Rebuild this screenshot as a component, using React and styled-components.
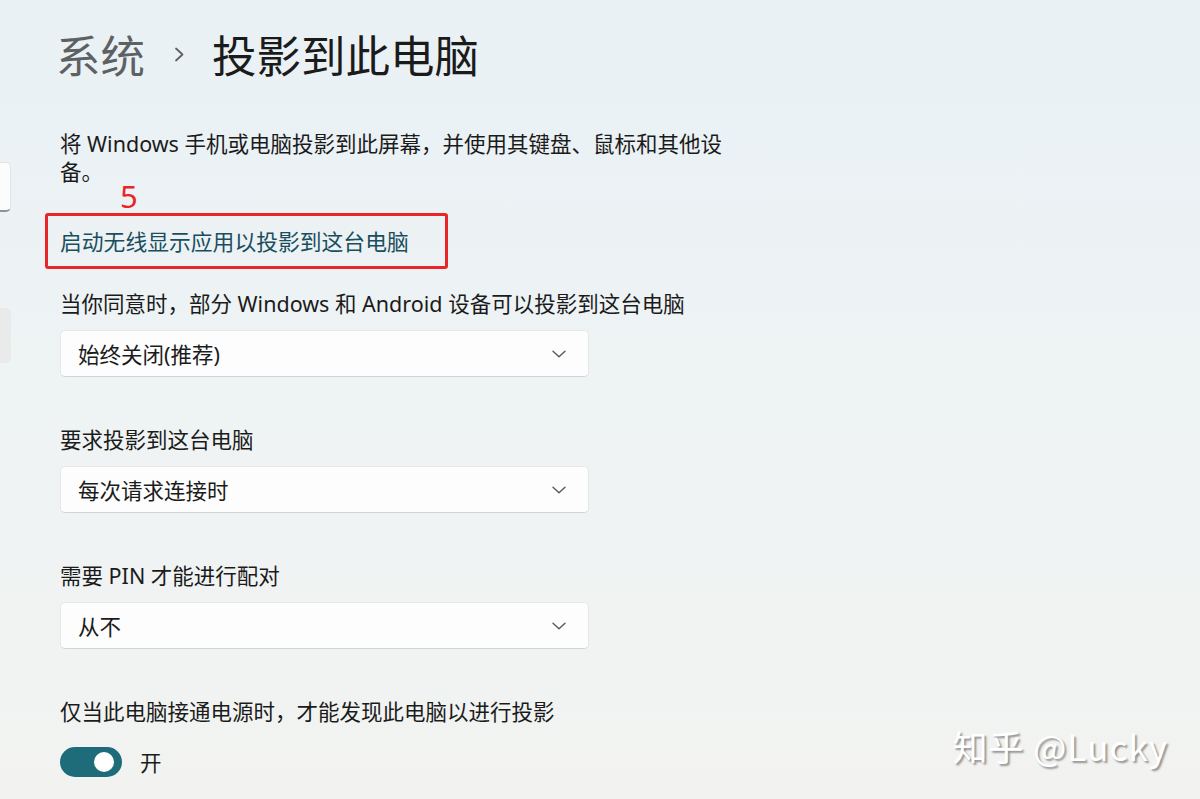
import React from "react";
import styled, { createGlobalStyle } from "styled-components";

const GlobalStyle = createGlobalStyle`
  html, body {
    margin: 0;
    padding: 0;
  }
  body {
    font-family: "Noto Sans", "Noto Sans CJK SC", sans-serif;
    background: #eef2f3;
  }
`;

const Window = styled.div`
  position: relative;
  width: 1200px;
  height: 799px;
  overflow: hidden;
  display: flex;
  background: linear-gradient(180deg, #e9f1f5 0%, #eef3f4 45%, #f2f3f1 100%);
`;

const Sidebar = styled.div`
  width: 11px;
  flex: none;
  display: flex;
  flex-direction: column;
  overflow: hidden;
`;

const SearchBox = styled.div`
  margin-top: 162px;
  margin-left: -20px;
  height: 47px;
  background: #fbfcfc;
  border: 1px solid #e2e4e5;
  border-bottom: 2px solid #8f9396;
  border-radius: 5px;
`;

const NavItem = styled.div`
  margin-top: 96px;
  margin-left: -20px;
  height: 55px;
  background: #e9eaea;
  border-radius: 5px;
`;

const Main = styled.main`
  flex: 1;
  padding: 26px 0 0 49px;
  display: flex;
  flex-direction: column;
  align-items: flex-start;
`;

const Breadcrumb = styled.h1`
  margin: 0 0 0 -4px;
  display: flex;
  align-items: center;
  font-family: "Noto Sans CJK SC", sans-serif;
  font-weight: 400;
  font-size: 44.5px;
  line-height: 56px;
  color: #1b1b1b;
`;

const Parent = styled.span`
  color: #5e6163;
`;

const Separator = styled.span`
  display: flex;
  margin: 0 27px 0 29px;
`;

const Description = styled.p`
  margin: 48px 0 0;
  max-width: 680px;
  font-size: 21.5px;
  line-height: 28px;
  color: #1b1b1b;
`;

const LinkBox = styled.div`
  position: relative;
  margin: 27px 0 0 -15px;
  padding: 11px 36px 11px 12px;
  border: 3px solid #e8262a;
  border-radius: 3px;
`;

const StepBadge = styled.span`
  position: absolute;
  left: 72px;
  top: -30px;
  font-family: "Noto Sans", sans-serif;
  font-size: 31px;
  line-height: 20px;
  color: #e8262a;
`;

const Link = styled.a`
  display: block;
  font-family: "Noto Sans CJK SC", sans-serif;
  font-size: 21.8px;
  line-height: 28px;
  color: #1a4e5f;
  text-decoration: none;
`;

const Label = styled.div`
  margin-top: ${(p) => p.$gap}px;
  font-size: 21.5px;
  line-height: 28px;
  color: #1b1b1b;
`;

const Select = styled.div`
  margin-top: 12px;
  box-sizing: border-box;
  width: 529px;
  height: 47px;
  padding: 0 22px 0 17px;
  display: flex;
  align-items: center;
  justify-content: space-between;
  background: #fdfdfd;
  border: 1px solid #e6e7e7;
  border-bottom-color: #d2d3d3;
  border-radius: 5px;
  font-size: 21.5px;
  color: #1b1b1b;
`;

const ToggleRow = styled.div`
  margin-top: 20px;
  display: flex;
  align-items: center;
  gap: 18px;
  font-size: 21.5px;
  color: #1b1b1b;
`;

const Track = styled.div`
  box-sizing: border-box;
  width: 62px;
  height: 30px;
  border-radius: 15px;
  background: #1e6b7a;
  display: flex;
  align-items: center;
  justify-content: ${(p) => (p.$on ? "flex-end" : "flex-start")};
  padding: 0 8px;
`;

const Knob = styled.div`
  width: 20px;
  height: 20px;
  border-radius: 50%;
  background: #ffffff;
`;

const Watermark = styled.div`
  position: absolute;
  right: 32px;
  bottom: 33px;
  font-family: "Noto Sans CJK SC", sans-serif;
  font-size: 35px;
  line-height: 40px;
  color: #ffffff;
  letter-spacing: 1px;
  text-shadow: 2px 2px 2px rgba(0, 0, 0, 0.4);
`;

const Chevron = () => (
  <svg width="14" height="8" viewBox="0 0 14 8">
    <path d="M1 1.2 L7 6.8 L13 1.2" fill="none" stroke="#5a5a5a" strokeWidth="1.4" strokeLinecap="round" strokeLinejoin="round" />
  </svg>
);

const CrumbArrow = () => (
  <svg width="11" height="15" viewBox="0 0 11 15">
    <path d="M2 1.5 L8.5 7.5 L2 13.5" fill="none" stroke="#5e6163" strokeWidth="1.8" strokeLinecap="round" strokeLinejoin="round" />
  </svg>
);

const settings = [
  { label: "当你同意时，部分 Windows 和 Android 设备可以投影到这台电脑", value: "始终关闭(推荐)", gap: 21 },
  { label: "要求投影到这台电脑", value: "每次请求连接时", gap: 49 },
  { label: "需要 PIN 才能进行配对", value: "从不", gap: 49 },
];

export default function App() {
  return (
    <>
      <GlobalStyle />
      <Window>
        <Sidebar>
          <SearchBox />
          <NavItem />
        </Sidebar>
        <Main>
          <Breadcrumb>
            <Parent>系统</Parent>
            <Separator>
              <CrumbArrow />
            </Separator>
            <span>投影到此电脑</span>
          </Breadcrumb>
          <Description>将 Windows 手机或电脑投影到此屏幕，并使用其键盘、鼠标和其他设备。</Description>
          <LinkBox>
            <StepBadge>5</StepBadge>
            <Link href="#">启动无线显示应用以投影到这台电脑</Link>
          </LinkBox>
          {settings.map((s) => (
            <React.Fragment key={s.label}>
              <Label $gap={s.gap}>{s.label}</Label>
              <Select>
                <span>{s.value}</span>
                <Chevron />
              </Select>
            </React.Fragment>
          ))}
          <Label $gap={49}>仅当此电脑接通电源时，才能发现此电脑以进行投影</Label>
          <ToggleRow>
            <Track $on>
              <Knob />
            </Track>
            <span>开</span>
          </ToggleRow>
        </Main>
        <Watermark>知乎 @Lucky</Watermark>
      </Window>
    </>
  );
}
